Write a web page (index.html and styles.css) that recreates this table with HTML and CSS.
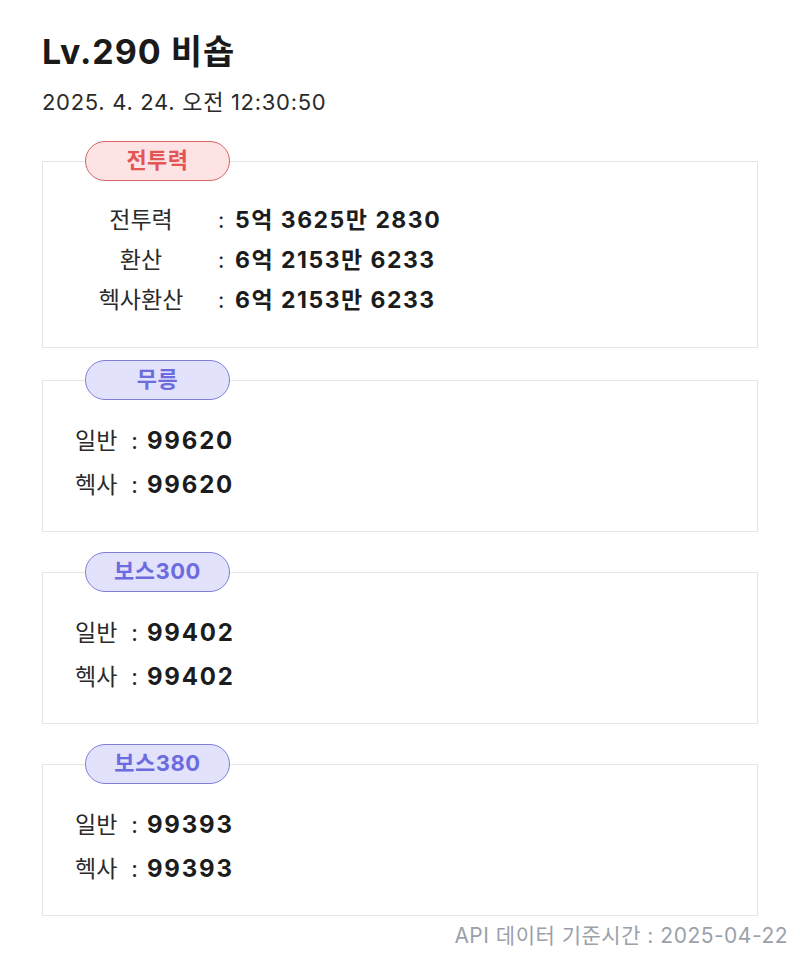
FILE: index.html
```html
<!DOCTYPE html>
<html lang="ko">
<head>
<meta charset="utf-8">
<link rel="stylesheet" href="styles.css">
</head>
<body>
<main class="page">
  <header class="head">
    <h1 class="title">Lv.290 비숍</h1>
    <p class="date">2025. 4. 24. 오전 12:30:50</p>
  </header>

  <fieldset class="box box-power">
    <legend class="pill pill-red"><span class="pill-text">전투력</span></legend>
    <div class="power-grid">
      <span class="plabel">전투력</span><span class="pval"><span class="colon">:</span><b>5억 3625만 2830</b></span>
      <span class="plabel">환산</span><span class="pval"><span class="colon">:</span><b>6억 2153만 6233</b></span>
      <span class="plabel">헥사환산</span><span class="pval"><span class="colon">:</span><b>6억 2153만 6233</b></span>
    </div>
  </fieldset>

  <fieldset class="box box-score box-first">
    <legend class="pill pill-blue"><span class="pill-text">무릉</span></legend>
    <div class="row"><span class="rlabel">일반</span><span class="rcolon">:</span><b>99620</b></div>
    <div class="row"><span class="rlabel">헥사</span><span class="rcolon">:</span><b>99620</b></div>
  </fieldset>

  <fieldset class="box box-score">
    <legend class="pill pill-blue"><span class="pill-text">보스300</span></legend>
    <div class="row"><span class="rlabel">일반</span><span class="rcolon">:</span><b>99402</b></div>
    <div class="row"><span class="rlabel">헥사</span><span class="rcolon">:</span><b>99402</b></div>
  </fieldset>

  <fieldset class="box box-score">
    <legend class="pill pill-blue"><span class="pill-text">보스380</span></legend>
    <div class="row"><span class="rlabel">일반</span><span class="rcolon">:</span><b>99393</b></div>
    <div class="row"><span class="rlabel">헥사</span><span class="rcolon">:</span><b>99393</b></div>
  </fieldset>

  <p class="foot">API 데이터 기준시간 : 2025-04-22</p>
</main>
</body>
</html>
```

FILE: styles.css
```css
html, body {
  margin: 0;
  padding: 0;
  background: #ffffff;
}
body {
  font-family: "Inter", "Noto Sans CJK KR", sans-serif;
  color: #222222;
}
.page {
  padding: 28px 42px 0 42px;
}
.head {
  margin: 0;
}
.title {
  margin: 0;
  font-size: 34px;
  line-height: 48px;
  font-weight: 700;
  color: #1a1a1a;
  letter-spacing: 1px;
}
.date {
  margin: 12px 0 0 0;
  font-size: 22px;
  line-height: 28px;
  color: #2a2a2a;
  letter-spacing: 0.7px;
}
.box {
  margin: 0;
  border: 1px solid #e4e4e4;
  min-width: 0;
}
.box-power {
  margin-top: 25px;
  padding: 19px 0 27px 0;
}
.box-score {
  margin-top: 20px;
  padding: 19px 0 24px 32px;
}
.box-first {
  margin-top: 12px;
}
.pill {
  box-sizing: border-box;
  height: 40px;
  width: 145px;
  margin-left: 42px;
  padding: 0;
  border-radius: 20px;
  text-align: left;
}
.pill-text {
  display: block;
  text-align: center;
  font-size: 22px;
  line-height: 37px;
  font-weight: 700;
  letter-spacing: 0.5px;
}
.box-score .pill {
  margin-left: 10px;
}
.pill-red {
  background: #fde3e3;
  border: 1.5px solid #d96464;
  color: #e45454;
}
.pill-blue {
  background: #e2e2fc;
  border: 1.5px solid #7f7fd8;
  color: #6c6cdf;
}
.power-grid {
  display: grid;
  grid-template-columns: 112px auto;
  padding-left: 42px;
  font-size: 22px;
  line-height: 40px;
}
.plabel {
  text-align: center;
  color: #2a2a2a;
  font-size: 23px;
}
.pval {
  padding-left: 21px;
}
.colon {
  display: inline-block;
  width: 17px;
}
.pval b {
  font-size: 23px;
  font-weight: 700;
  color: #1c1c1c;
  letter-spacing: 1.5px;
}
.row {
  font-size: 23px;
  line-height: 43px;
  color: #2a2a2a;
}
.rcolon {
  margin: 0 9px 0 14px;
}
.row b {
  font-size: 24px;
  font-weight: 700;
  color: #1c1c1c;
  letter-spacing: 1.8px;
}
.foot {
  margin: 7px -30px 0 0;
  text-align: right;
  font-size: 21px;
  line-height: 26px;
  color: #9ba1ab;
  letter-spacing: 0.5px;
}
```
